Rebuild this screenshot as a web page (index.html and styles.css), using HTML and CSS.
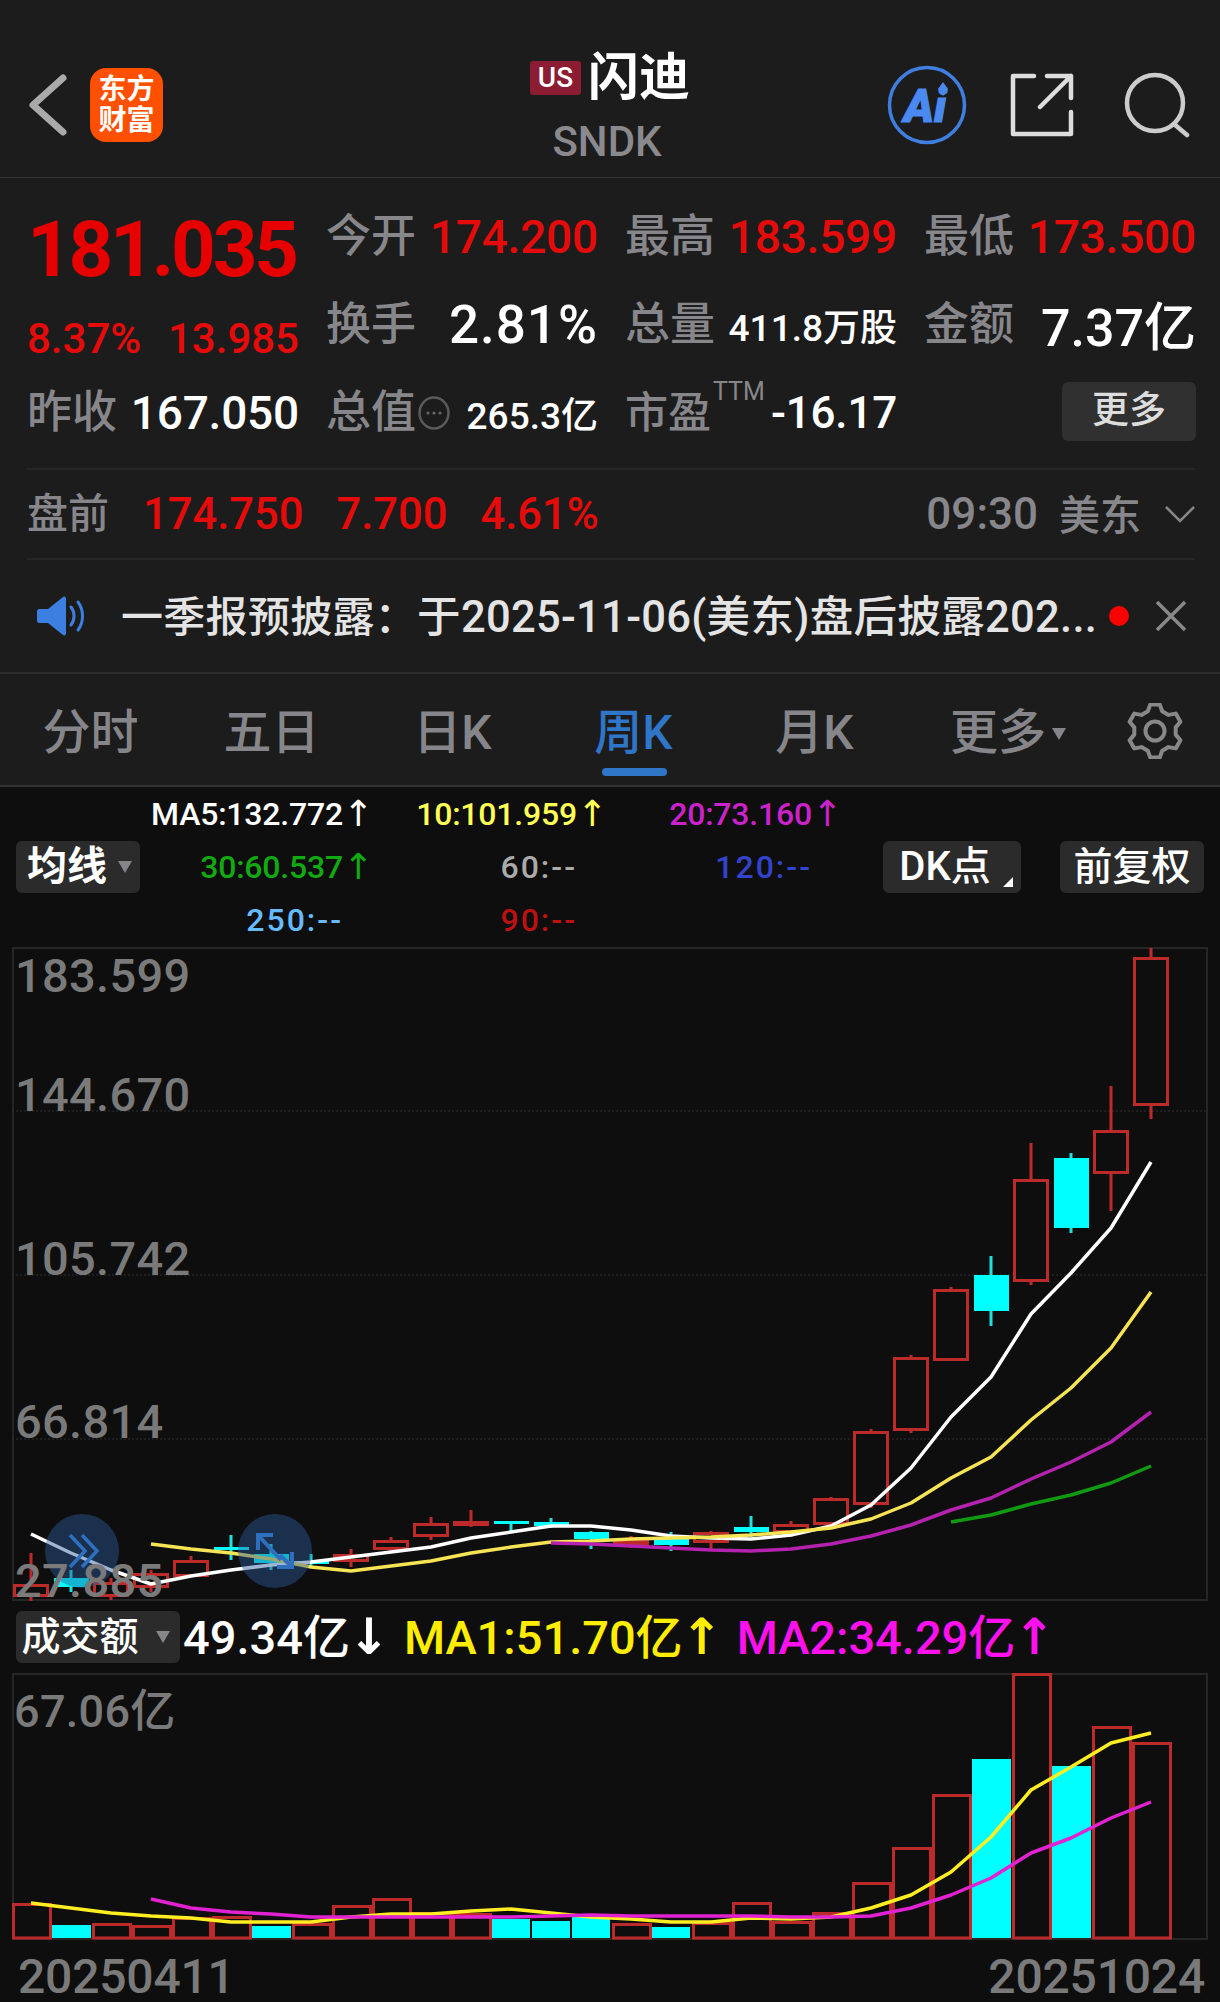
FILE: index.html
```html
<!DOCTYPE html>
<html lang="zh-CN">
<head>
  <meta charset="UTF-8">
  <title>闪迪 SNDK</title>
  <link rel="stylesheet" href="styles.css">
</head>
<body>
  <header class="topbar">
    <svg class="back" width="40" height="66" viewBox="0 0 40 66"><path d="M35 6 5 33l30 27" fill="none" stroke="#aaa" stroke-width="7" stroke-linecap="round" stroke-linejoin="round"/></svg>
    <div class="logo"><span>东方</span><span>财富</span></div>
    <div class="title">
      <div class="title-main"><span class="us">US</span><span class="name">闪迪</span></div>
      <div class="code">SNDK</div>
    </div>
    <div class="top-icons">
      <svg class="ai" width="80" height="80" viewBox="0 0 80 80">
        <circle cx="40" cy="40" r="37.5" fill="none" stroke="#3f7fe0" stroke-width="3.5"/>
        <text x="38" y="57" text-anchor="middle" class="ai-text">Ai</text>
        <path d="M56 17l5 7-5 7-5-7z" fill="#4a8af0"/>
      </svg>
      <svg class="share" width="66" height="66" viewBox="0 0 66 66"><path d="M25 4H4v58h58V40M31 35 62 4M38 4h24v22" fill="none" stroke="#ddd" stroke-width="4.5" stroke-linecap="round" stroke-linejoin="round"/></svg>
      <svg class="search" width="66" height="66" viewBox="0 0 66 66"><circle cx="31" cy="31" r="28" fill="none" stroke="#ccc" stroke-width="4.5"/><path d="M50 52 63 63" stroke="#ccc" stroke-width="4.5" stroke-linecap="round"/></svg>
    </div>
  </header>

  <section class="stats">
    <div class="cell cell-low"><span class="price">181.035</span></div>
    <div class="cell"><span class="lbl">今开</span><span class="val red">174.200</span></div>
    <div class="cell"><span class="lbl">最高</span><span class="val red">183.599</span></div>
    <div class="cell"><span class="lbl">最低</span><span class="val red">173.500</span></div>

    <div class="cell cell-low"><span class="chg red">8.37%</span><span class="chg red">13.985</span></div>
    <div class="cell"><span class="lbl">换手</span><span class="big">2.81%</span></div>
    <div class="cell"><span class="lbl">总量</span><span class="small">411.8万股</span></div>
    <div class="cell"><span class="lbl">金额</span><span class="big big-cny">7.37亿</span></div>

    <div class="cell"><span class="lbl">昨收</span><span class="val white">167.050</span></div>
    <div class="cell">
      <span class="lbl">总值</span>
      <svg class="info" width="32" height="34" viewBox="0 0 32 34"><ellipse cx="16" cy="17" rx="14.5" ry="15.5" fill="none" stroke="#5a5a5a" stroke-width="2.5"/><circle cx="10" cy="17" r="1.6" fill="#666"/><circle cx="16" cy="17" r="1.6" fill="#666"/><circle cx="22" cy="17" r="1.6" fill="#666"/></svg>
      <span class="small push">265.3亿</span>
    </div>
    <div class="cell"><span class="lbl lbl-tight">市盈</span><sup class="ttm">TTM</sup><span class="val val-neg white push">-16.17</span></div>
    <div class="cell cell-end"><span class="more">更多</span></div>
  </section>

  <section class="pre">
    <span class="lbl pre-lbl">盘前</span>
    <span class="pre-val red">174.750</span>
    <span class="pre-val red">7.700</span>
    <span class="pre-val red">4.61%</span>
    <span class="pre-time">09:30</span>
    <span class="pre-zone">美东</span>
    <svg width="30" height="18" viewBox="0 0 30 18"><path d="M1 2l14 14L29 2" fill="none" stroke="#888" stroke-width="2.5"/></svg>
  </section>

  <section class="notice">
    <svg class="speaker" width="48" height="40" viewBox="0 0 48 40">
      <path d="M2 13h9L26 1c2-1 3 0 3 2v34c0 2-1 3-3 2L11 27H2c-1 0-2-1-2-2V15c0-1 1-2 2-2z" fill="#3b7fe0"/>
      <path d="M34 11c4 5 4 13 0 18M41 6c6 8 6 20 0 28" fill="none" stroke="#3b7fe0" stroke-width="3" stroke-linecap="round"/>
    </svg>
    <span class="notice-text"><span class="notice-head">一季报预披露：</span>于2025-11-06(美东)盘后披露202...</span>
    <span class="dot"></span>
    <svg class="close" width="34" height="34" viewBox="0 0 34 34"><path d="M3 3l28 28M31 3 3 31" stroke="#888" stroke-width="3.5"/></svg>
  </section>

  <nav class="tabs">
    <span class="tab">分时</span>
    <span class="tab">五日</span>
    <span class="tab">日K</span>
    <span class="tab active">周K</span>
    <span class="tab">月K</span>
    <span class="tab tab-more">更多<i class="tri"></i></span>
    <svg class="gear" width="56" height="56" viewBox="0 0 56 56">
      <path d="M23.3 1.4 32.7 1.4 35.2 8.3 41.5 11.9 48.7 10.6 53.4 18.8 48.7 24.4 48.7 31.6 53.4 37.2 48.7 45.4 41.5 44.1 35.2 47.7 32.7 54.6 23.3 54.6 20.8 47.7 14.5 44.1 7.3 45.4 2.6 37.2 7.3 31.6 7.3 24.4 2.6 18.8 7.3 10.6 14.5 11.9 20.8 8.3Z" fill="none" stroke="#888" stroke-width="4" stroke-linejoin="round"/>
      <circle cx="28" cy="28" r="9.5" fill="none" stroke="#888" stroke-width="4"/>
    </svg>
  </nav>

  <main class="board">
    <div class="ma-panel">
      <span class="chip chip-ma">均线<i class="tri tri-sm"></i></span>
      <div class="ma-grid">
        <span class="ma c-white">MA5:132.772<b>↑</b></span>
        <span class="ma c-yellow">10:101.959<b>↑</b></span>
        <span class="ma c-purple">20:73.160<b>↑</b></span>
        <span class="ma c-green">30:60.537<b>↑</b></span>
        <span class="ma ma-empty c-grey">60:--<b></b></span>
        <span class="ma ma-empty c-blue">120:--<b></b></span>
        <span class="ma ma-empty c-sky">250:--<b></b></span>
        <span class="ma ma-empty c-dark">90:--<b></b></span>
      </div>
      <span class="chip chip-dk">DK点<i class="corner"></i></span>
      <span class="chip chip-fq">前复权</span>
    </div>

    <div class="kline">
      <svg class="plot" width="1196" height="654" viewBox="12 947 1196 654">
        <rect x="13" y="948" width="1194" height="652" fill="none" stroke="#262626" stroke-width="2"/>
        <path d="M12 1111H1208M12 1275H1208M12 1439H1208" stroke="#303030" stroke-width="1" stroke-dasharray="2 2"/>

        <path class="wick-up" d="M31 1553V1602M111 1578V1600M151 1570V1592M191 1556V1577M351 1549V1567M391 1537V1552M431 1517V1540M471 1510V1527M631 1536V1548M711 1531V1549M791 1521V1537M831 1497V1525M871 1429V1508M911 1355V1433M951 1287V1361M1031 1143V1285M1111 1086V1211M1151 948V1119"/>
        <path class="wick-down" d="M71 1570V1592M231 1535V1560M271 1544V1570M311 1554V1568M511 1521V1532M551 1518V1528M591 1531V1549M671 1532V1551M751 1516V1537M991 1256V1326M1071 1153V1233"/>

        <g class="body-up">
          <rect x="14.5" y="1585.5" width="33" height="10"/>
          <rect x="94.5" y="1583.5" width="33" height="12"/>
          <rect x="134.5" y="1574.5" width="33" height="12"/>
          <rect x="174.5" y="1561.5" width="33" height="14"/>
          <rect x="334.5" y="1555.5" width="33" height="5"/>
          <rect x="374.5" y="1541.5" width="33" height="7"/>
          <rect x="414.5" y="1524.5" width="33" height="11"/>
          <rect x="454.5" y="1522.5" width="33" height="2"/>
          <rect x="614.5" y="1541.5" width="33" height="2"/>
          <rect x="694.5" y="1533.5" width="33" height="8"/>
          <rect x="774.5" y="1525.5" width="33" height="6"/>
          <rect x="814.5" y="1499.5" width="33" height="24"/>
          <rect x="854.5" y="1432.5" width="33" height="71"/>
          <rect x="894.5" y="1358.5" width="33" height="71"/>
          <rect x="934.5" y="1290.5" width="33" height="69"/>
          <rect x="1014.5" y="1180.5" width="33" height="100"/>
          <rect x="1094.5" y="1131.5" width="33" height="41"/>
          <rect x="1134.5" y="958.5" width="33" height="146"/>
        </g>
        <g class="body-down">
          <rect x="54" y="1578" width="35" height="9"/>
          <rect x="214" y="1547" width="35" height="3"/>
          <rect x="254" y="1554" width="35" height="9"/>
          <rect x="294" y="1561" width="35" height="3"/>
          <rect x="494" y="1521" width="35" height="3"/>
          <rect x="534" y="1522" width="35" height="4"/>
          <rect x="574" y="1532" width="35" height="7"/>
          <rect x="654" y="1539" width="35" height="6"/>
          <rect x="734" y="1527" width="35" height="5"/>
          <rect x="974" y="1275" width="35" height="36"/>
          <rect x="1054" y="1158" width="35" height="70"/>
        </g>

        <polyline class="ma-line" stroke="#fff" points="31,1534 71,1553 111,1570 151,1584 191,1576 231,1570 271,1565 311,1562 351,1557 391,1552 431,1547 471,1538 511,1532 551,1526 591,1526 631,1530 671,1536 711,1538 751,1539 791,1535 831,1526 871,1505 911,1468 951,1417 991,1377 1031,1314 1071,1273 1111,1228 1151,1162"/>
        <polyline class="ma-line" stroke="#f6e454" points="151,1544 191,1549 231,1553 271,1559 311,1567 351,1571 391,1566 431,1561 471,1553 511,1547 551,1542 591,1541 631,1539 671,1538 711,1537 751,1535 791,1532 831,1528 871,1519 911,1503 951,1478 991,1457 1031,1420 1071,1388 1111,1348 1151,1292"/>
        <polyline class="ma-line" stroke="#b522b0" points="551,1543 591,1544 631,1546 671,1548 711,1550 751,1551 791,1549 831,1544 871,1536 911,1525 951,1510 991,1498 1031,1479 1071,1462 1111,1442 1151,1412"/>
        <polyline class="ma-line" stroke="#119a11" points="951,1522 991,1515 1031,1504 1071,1495 1111,1483 1151,1466"/>

        <circle cx="82" cy="1551" r="37" fill="#2a5c9c" fill-opacity=".45"/>
        <circle cx="275" cy="1551" r="37" fill="#2a5c9c" fill-opacity=".45"/>
        <path d="M70 1535l15 16-15 16M82 1535l15 16-15 16" fill="none" stroke="#2f6fc0" stroke-width="3.5"/>
        <path d="M273 1535H258V1550M258 1535 281 1560M277 1567H292V1552M292 1567 280 1555" fill="none" stroke="#2f6fc0" stroke-width="4"/>
      </svg>
      <span class="axis axis-1">183.599</span>
      <span class="axis axis-2">144.670</span>
      <span class="axis axis-3">105.742</span>
      <span class="axis axis-4">66.814</span>
      <span class="axis axis-5">27.885</span>
    </div>

    <div class="vol-head">
      <span class="chip chip-vol">成交额<i class="tri tri-vol"></i></span>
      <span class="vol-val c-white">49.34亿<b>↓</b></span>
      <span class="vol-val c-ma1">MA1:51.70亿<b>↑</b></span>
      <span class="vol-val c-ma2">MA2:34.29亿<b>↑</b></span>
    </div>

    <div class="volume">
      <svg class="plot" width="1196" height="267" viewBox="12 1673 1196 267">
        <rect x="13" y="1674" width="1194" height="265" fill="none" stroke="#262626" stroke-width="2"/>
        <g class="body-up">
          <rect x="13.5" y="1904.5" width="37" height="33.5"/>
          <rect x="93.5" y="1924.5" width="37" height="13.5"/>
          <rect x="133.5" y="1926.5" width="37" height="11.5"/>
          <rect x="173.5" y="1918.5" width="37" height="19.5"/>
          <rect x="213.5" y="1917.5" width="37" height="20.5"/>
          <rect x="293.5" y="1924.5" width="37" height="13.5"/>
          <rect x="333.5" y="1906.5" width="37" height="31.5"/>
          <rect x="373.5" y="1899.5" width="37" height="38.5"/>
          <rect x="413.5" y="1913.5" width="37" height="24.5"/>
          <rect x="453.5" y="1914.5" width="37" height="23.5"/>
          <rect x="613.5" y="1924.5" width="37" height="13.5"/>
          <rect x="693.5" y="1923.5" width="37" height="14.5"/>
          <rect x="733.5" y="1903.5" width="37" height="34.5"/>
          <rect x="773.5" y="1922.5" width="37" height="15.5"/>
          <rect x="813.5" y="1913.5" width="37" height="24.5"/>
          <rect x="853.5" y="1883.5" width="37" height="54.5"/>
          <rect x="893.5" y="1848.5" width="37" height="89.5"/>
          <rect x="933.5" y="1795.5" width="37" height="142.5"/>
          <rect x="1013.5" y="1674.5" width="37" height="263.5"/>
          <rect x="1093.5" y="1727.5" width="37" height="210.5"/>
          <rect x="1133.5" y="1743.5" width="37" height="194.5"/>
        </g>
        <g class="body-down">
          <rect x="52" y="1925" width="39" height="13"/>
          <rect x="252" y="1926" width="39" height="12"/>
          <rect x="492" y="1919" width="38" height="19"/>
          <rect x="532" y="1921" width="38" height="17"/>
          <rect x="572" y="1917" width="38" height="21"/>
          <rect x="652" y="1927" width="38" height="11"/>
          <rect x="972" y="1759" width="39" height="179"/>
          <rect x="1052" y="1766" width="39" height="172"/>
        </g>
        <polyline class="ma-line" stroke="#ffee22" points="31,1903 71,1908 111,1913 151,1916 191,1918 231,1922 271,1922 311,1922 351,1917 391,1914 431,1914 471,1911 511,1909 551,1913 591,1917 631,1919 671,1922 711,1922 751,1918 791,1919 831,1917 871,1908 911,1895 951,1872 991,1837 1031,1790 1071,1767 1111,1743 1151,1733"/>
        <polyline class="ma-line" stroke="#e222d2" points="151,1899 191,1908 231,1912 271,1914 311,1917 351,1917 391,1917 431,1917 471,1917 511,1917 551,1916 591,1915 631,1916 671,1916 711,1916 751,1916 791,1917 831,1917 871,1916 911,1908 951,1895 991,1878 1031,1853 1071,1838 1111,1818 1151,1802"/>
      </svg>
      <span class="axis axis-vol">67.06亿</span>
    </div>

    <div class="dates"><span>20250411</span><span>20251024</span></div>
  </main>
</body>
</html>
```
FILE: styles.css
```css
* {
  box-sizing: border-box;
}
body {
  margin: 0;
  width: 1220px;
  height: 2002px;
  overflow: hidden;
  background-color: #1c1c1c;
  font-family: Roboto, "Noto Sans CJK SC", sans-serif;
  color: #fff;
}
.red {
  color: #e60b0b;
}
.white {
  color: #fff;
}

/* top bar */
.topbar {
  position: relative;
  display: flex;
  align-items: center;
  height: 178px;
  padding: 32px 28px 0;
  border-bottom: 1px solid #333;
}
.logo {
  display: flex;
  flex-direction: column;
  align-items: center;
  justify-content: center;
  width: 73px;
  height: 74px;
  margin-left: 22px;
  background-color: #ff4f00;
  border-radius: 16px;
  font-size: 28px;
  line-height: 31px;
  font-weight: 700;
}
.title {
  position: absolute;
  left: 0;
  right: 0;
  top: 46px;
  text-align: center;
}
.title-main {
  display: flex;
  justify-content: center;
  align-items: center;
  height: 64px;
}
.us {
  width: 51px;
  height: 34px;
  margin-right: 7px;
  background-color: #8b1c32;
  border-radius: 3px;
  font-size: 28px;
  line-height: 34px;
  font-weight: 500;
}
.name {
  font-size: 51px;
  font-weight: 700;
  line-height: 64px;
}
.code {
  margin-top: 9px;
  padding-right: 6px;
  font-size: 42px;
  line-height: 46px;
  color: #8a8a8e;
  font-weight: 500;
}
.top-icons {
  display: flex;
  align-items: center;
  margin-left: auto;
  margin-right: 2px;
}
.ai-text {
  font-size: 46px;
  font-weight: 900;
  font-style: italic;
  fill: #4a8af0;
  stroke: #4a8af0;
  stroke-width: 1;
}
.share {
  margin-left: 42px;
}
.search {
  margin-left: 49px;
}

/* quote grid */
.stats {
  display: grid;
  grid-template-columns: repeat(4, 272px);
  grid-auto-rows: 88px;
  column-gap: 27px;
  margin: 0 25px 0 27px;
  padding: 15px 0 11px;
  border-bottom: 2px solid #262626;
}
.cell {
  display: flex;
  align-items: center;
  justify-content: space-between;
  white-space: nowrap;
}
.cell-low {
  padding-top: 26px;
}
.cell-end {
  justify-content: flex-end;
}
.lbl {
  font-size: 45px;
  color: #87878b;
  font-weight: 500;
  line-height: 60px;
}
.lbl-tight {
  font-size: 43px;
}
.price {
  font-size: 78px;
  font-weight: 700;
  letter-spacing: -3.2px;
  color: #e60000;
  line-height: 88px;
}
.val {
  font-size: 46px;
  font-weight: 500;
  letter-spacing: -.2px;
}
.val-neg {
  font-size: 44px;
}
.chg {
  font-size: 42px;
  font-weight: 500;
}
.big {
  font-size: 53px;
  font-weight: 500;
  letter-spacing: 1px;
}
.big-cny {
  padding-bottom: 4px;
  font-size: 52px;
  letter-spacing: 0;
}
.small {
  font-size: 37px;
  font-weight: 500;
}
.push {
  margin-left: auto;
}
.info {
  margin-left: 2px;
}
.ttm {
  align-self: flex-start;
  margin: 8px 0 0 2px;
  font-size: 25px;
  color: #87878b;
}
.more {
  width: 134px;
  height: 59px;
  margin-bottom: 3px;
  background-color: #303030;
  border-radius: 6px;
  text-align: center;
  font-size: 37px;
  line-height: 57px;
  color: #ddd;
  font-weight: 500;
}

/* pre market */
.pre {
  display: flex;
  align-items: center;
  height: 90px;
  margin: 0 25px 0 27px;
  border-bottom: 2px solid #262626;
}
.pre-lbl {
  margin-right: 34px;
  font-size: 41px;
}
.pre-val {
  margin-right: 33px;
  font-size: 43.5px;
  font-weight: 500;
}
.pre-time {
  margin-left: auto;
  font-size: 44px;
  color: #87878b;
  font-weight: 500;
}
.pre-zone {
  margin: 0 24px 0 21px;
  padding-bottom: 4px;
  font-size: 41px;
  color: #87878b;
  font-weight: 500;
}

/* notice */
.notice {
  display: flex;
  align-items: center;
  height: 114px;
  padding: 0 32px 0 37px;
  border-bottom: 2px solid #2c2c2c;
}
.notice-text {
  margin-left: 36px;
  padding-bottom: 6px;
  font-size: 43.5px;
  letter-spacing: .3px;
  font-weight: 500;
  color: #e4e4e4;
  white-space: nowrap;
}
.notice-head {
  font-size: 42px;
}
.dot {
  flex: none;
  width: 20px;
  height: 20px;
  margin-left: 12px;
  background-color: #f00;
  border-radius: 50%;
}
.close {
  flex: none;
  margin-left: auto;
}

/* period tabs */
.tabs {
  position: relative;
  display: flex;
  align-items: center;
  height: 113px;
  padding-bottom: 3px;
  border-bottom: 2px solid #333;
}
.tab {
  position: relative;
  width: 181px;
  text-align: center;
  font-size: 48px;
  font-weight: 500;
  color: #86868a;
}
.tab.active {
  color: #2f75c8;
}
.tab.active::after {
  content: "";
  position: absolute;
  left: 59px;
  top: 75px;
  width: 65px;
  height: 8px;
  background-color: #2f75c8;
  border-radius: 4px;
}
.tab-more {
  width: 200px;
  padding-left: 6px;
}
.tri {
  display: inline-block;
  margin-left: 6px;
  vertical-align: 9px;
  border-left: 7px solid transparent;
  border-right: 7px solid transparent;
  border-top: 12px solid #86868a;
}
.gear {
  position: absolute;
  left: 1127px;
  top: 29px;
}

/* chart board */
.board {
  height: 1215px;
  background-color: #0e0e0e;
}
.ma-panel {
  display: flex;
  align-items: center;
  height: 160px;
  padding: 0 16px;
}
.chip {
  display: block;
  position: relative;
  height: 52px;
  background-color: #2b2b2b;
  border-radius: 6px;
  font-size: 40px;
  line-height: 52px;
  text-align: center;
  font-weight: 700;
  white-space: nowrap;
}
.chip-ma {
  flex: none;
  width: 124px;
  padding-right: 22px;
}
.tri-sm {
  position: absolute;
  right: 8px;
  top: 20px;
  margin: 0;
}
.chip-dk {
  flex: none;
  width: 138px;
  margin-left: auto;
  padding-right: 14px;
  font-weight: 500;
}
.corner {
  position: absolute;
  right: 8px;
  bottom: 6px;
  border-left: 10px solid transparent;
  border-bottom: 10px solid #fff;
}
.chip-fq {
  flex: none;
  width: 144px;
  margin-left: 39px;
  font-size: 39px;
  font-weight: 500;
}
.ma-grid {
  display: grid;
  grid-template-columns: 229px 234px 235px;
  grid-auto-rows: 53px;
  margin-top: -1px;
}
.ma {
  display: flex;
  align-items: center;
  justify-content: flex-end;
  font-size: 32px;
  font-weight: 500;
  letter-spacing: -.2px;
  white-space: nowrap;
}
.ma-empty {
  letter-spacing: 2px;
}
.ma b {
  width: 26px;
  font-family: "DejaVu Sans", sans-serif;
  font-size: 36px;
  line-height: 40px;
  font-weight: 400;
  text-align: right;
}
.c-white { color: #fff; }
.c-yellow { color: #ffff55; }
.c-purple { color: #cc22cc; }
.c-green { color: #11aa11; }
.c-grey { color: #aaa; }
.c-blue { color: #3344cc; }
.c-sky { color: #66bbff; }
.c-dark { color: #bb1111; }
.c-ma1 { color: #ffee00; }
.c-ma2 { color: #ff11ee; }

.kline,
.volume {
  position: relative;
  margin-left: 12px;
  width: 1196px;
}
.kline {
  height: 654px;
}
.volume {
  height: 267px;
}
.plot {
  display: block;
}
.wick-up,
.wick-down {
  fill: none;
  stroke-width: 3;
}
.wick-up {
  stroke: #bd2a2a;
}
.wick-down {
  stroke: #1fdede;
}
.body-up rect {
  fill: #0e0e0e;
  stroke: #bd2a2a;
  stroke-width: 3;
}
.body-down rect {
  fill: #00ffff;
}
.ma-line {
  fill: none;
  stroke-width: 3.5;
  stroke-linejoin: round;
}
.axis {
  position: absolute;
  left: 3px;
  font-size: 47px;
  line-height: 46px;
  letter-spacing: .3px;
  color: #7a7a7a;
  font-weight: 500;
  white-space: nowrap;
}
.axis-1 { top: 6px; }
.axis-2 { top: 125px; }
.axis-3 { top: 289px; }
.axis-4 { top: 452px; }
.axis-5 { top: 611px; }
.axis-vol { top: 16px; left: 2px; font-size: 45px; }

.vol-head {
  display: flex;
  align-items: center;
  height: 72px;
  padding-left: 16px;
  font-weight: 500;
  white-space: nowrap;
}
.chip-vol {
  flex: none;
  width: 164px;
  height: 52px;
  margin-right: 3px;
  padding-right: 36px;
  font-size: 39px;
  font-weight: 500;
}
.tri-vol {
  position: absolute;
  right: 10px;
  top: 20px;
  margin: 0;
}
.vol-val {
  display: flex;
  align-items: center;
  margin-right: 19px;
  padding-bottom: 8px;
  font-size: 47px;
}
.vol-val b {
  display: flex;
  justify-content: center;
  width: 32px;
  margin-left: 3px;
  padding-top: 8px;
  font-family: "DejaVu Sans", sans-serif;
  font-size: 50px;
  font-weight: 700;
  line-height: 56px;
}
.dates {
  display: flex;
  justify-content: space-between;
  padding: 12px 15px 0 18px;
  font-size: 48px;
  letter-spacing: -.2px;
  line-height: 50px;
  font-weight: 500;
  color: #7a7a7a;
}
```
